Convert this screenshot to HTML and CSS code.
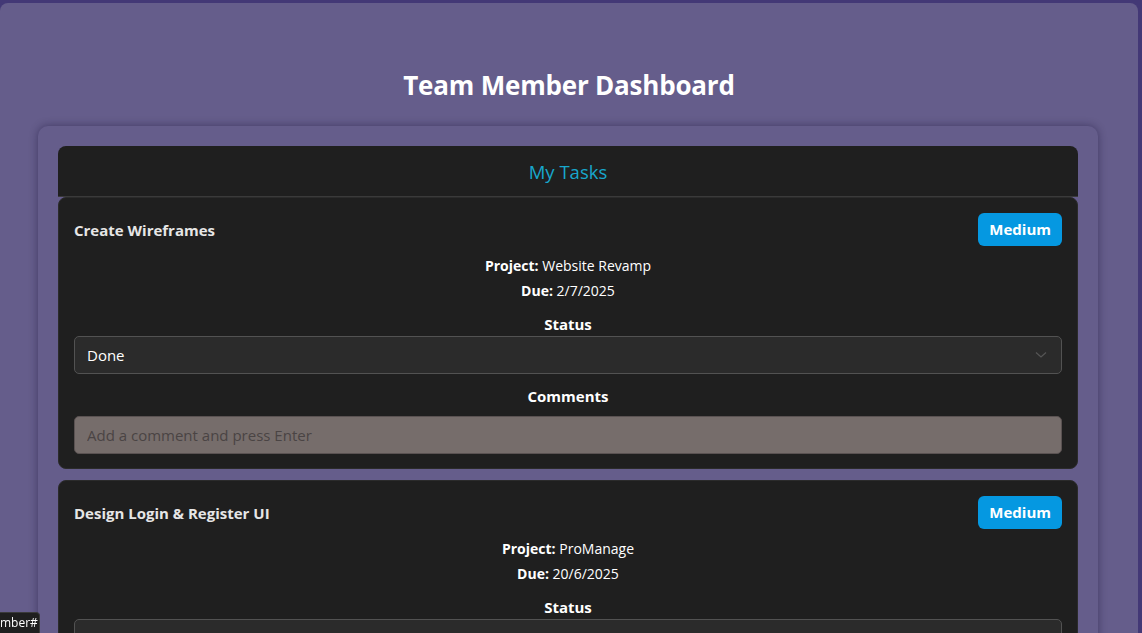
FILE: index.html
```html
<!DOCTYPE html>
<html lang="en">
<head>
<meta charset="utf-8">
<title>Team Member Dashboard</title>
<link rel="stylesheet" href="styles.css">
</head>
<body>
<div class="app">
  <h1 class="page-title">Team Member Dashboard</h1>
  <section class="board">
    <header class="tasks-header">My Tasks</header>

    <article class="task">
      <div class="task-head">
        <h3 class="task-title">Create Wireframes</h3>
        <span class="badge">Medium</span>
      </div>
      <div class="meta">
        <p><b>Project:</b> Website Revamp</p>
        <p><b>Due:</b> 2/7/2025</p>
      </div>
      <label class="field-label status-label">Status</label>
      <div class="select-wrap">
        <select class="select">
          <option>Done</option>
        </select>
        <svg class="chev" width="12" height="8" viewBox="0 0 12 8"><path d="M1 1.5 L6 6 L11 1.5" fill="none" stroke="#555" stroke-width="1.3"/></svg>
      </div>
      <label class="field-label comments-label">Comments</label>
      <input class="comment-input" type="text" placeholder="Add a comment and press Enter">
    </article>

    <article class="task">
      <div class="task-head">
        <h3 class="task-title">Design Login &amp; Register UI</h3>
        <span class="badge">Medium</span>
      </div>
      <div class="meta">
        <p><b>Project:</b> ProManage</p>
        <p><b>Due:</b> 20/6/2025</p>
      </div>
      <label class="field-label status-label">Status</label>
      <div class="select-wrap">
        <select class="select">
          <option>To Do</option>
        </select>
        <svg class="chev" width="12" height="8" viewBox="0 0 12 8"><path d="M1 1.5 L6 6 L11 1.5" fill="none" stroke="#555" stroke-width="1.3"/></svg>
      </div>
      <label class="field-label comments-label">Comments</label>
      <input class="comment-input" type="text" placeholder="Add a comment and press Enter">
    </article>
  </section>
</div>
<div class="status-tip">mber#</div>
</body>
</html>
```

FILE: styles.css
```css
html, body {
  height: 100%;
  overflow: hidden;
}
body {
  margin: 0;
  background: #433876;
  font-family: "Open Sans", "Noto Sans", sans-serif;
  color: #fff;
}
.app {
  margin: 3px 4px 0 0;
  min-height: 100%;
  background: #655d8b;
  border-radius: 8px 8px 0 0;
  padding: 62px 0 0 0;
  box-sizing: border-box;
}
.page-title {
  margin: 0;
  height: 40px;
  line-height: 40px;
  text-align: center;
  font-size: 26px;
  letter-spacing: -0.2px;
  font-weight: 700;
  color: #fff;
}
.board {
  margin: 21px 40px 0 38px;
  padding: 20px;
  background: #655d8b;
  border-radius: 10px;
  box-shadow: 0 0 8px rgba(20, 14, 50, 0.45);
}
.tasks-header {
  height: 50px;
  line-height: 52px;
  text-align: center;
  background: #1f1f1f;
  border-radius: 8px 8px 0 0;
  border-bottom: 1px solid #3a3a3a;
  color: #18a7cc;
  font-size: 18.5px;
}
.task {
  background: #1f1f1f;
  border-radius: 8px;
  padding: 15px 15px 14px;
  margin-bottom: 11px;
  border: 1px solid #2b2b2b;
  display: flex;
  flex-direction: column;
}
.task-head {
  display: flex;
  align-items: center;
  justify-content: space-between;
  height: 33px;
}
.task-title {
  margin: 0;
  font-size: 15px;
  font-weight: 700;
  color: #e6e6e6;
}
.badge {
  background: #0598e1;
  color: #fff;
  font-weight: 700;
  font-size: 15px;
  height: 33px;
  line-height: 33px;
  padding: 0 11px;
  border-radius: 6px;
}
.meta {
  margin-top: 7px;
  text-align: center;
  font-size: 14px;
}
.meta p {
  margin: 0;
  line-height: 25px;
}
.meta b {
  font-weight: 700;
}
.field-label {
  display: block;
  text-align: center;
  font-weight: 700;
  font-size: 15px;
  line-height: 20px;
}
.status-label {
  margin-top: 11px;
  margin-bottom: 2px;
}
.select-wrap {
  position: relative;
}
.select {
  appearance: none;
  -webkit-appearance: none;
  width: 100%;
  height: 38px;
  box-sizing: border-box;
  background: #2b2b2b;
  border: 1px solid #525252;
  border-radius: 5px;
  color: #fff;
  font-family: inherit;
  font-size: 15px;
  padding: 0 12px;
  outline: none;
}
.chev {
  position: absolute;
  right: 15px;
  top: 15px;
  pointer-events: none;
}
.comments-label {
  margin-top: 12px;
  margin-bottom: 10px;
}
.comment-input {
  width: 100%;
  height: 38px;
  box-sizing: border-box;
  background: #766d6b;
  border: 1px solid #5a5252;
  border-radius: 5px;
  padding: 0 12px;
  font-family: inherit;
  font-size: 15px;
  color: #fff;
  outline: none;
}
.comment-input::placeholder {
  color: #4a4444;
}
.status-tip {
  position: fixed;
  left: 0;
  bottom: 0;
  width: 40px;
  height: 21px;
  box-sizing: border-box;
  background: #1f1f1f;
  border: 1px solid #3a3a3a;
  border-left: none;
  border-bottom: none;
  border-radius: 0 4px 0 0;
  color: #fff;
  font-family: "Open Sans", sans-serif;
  font-size: 12px;
  line-height: 20px;
  overflow: hidden;
  white-space: nowrap;
  text-align: right;
  padding-right: 4px;
}
```
